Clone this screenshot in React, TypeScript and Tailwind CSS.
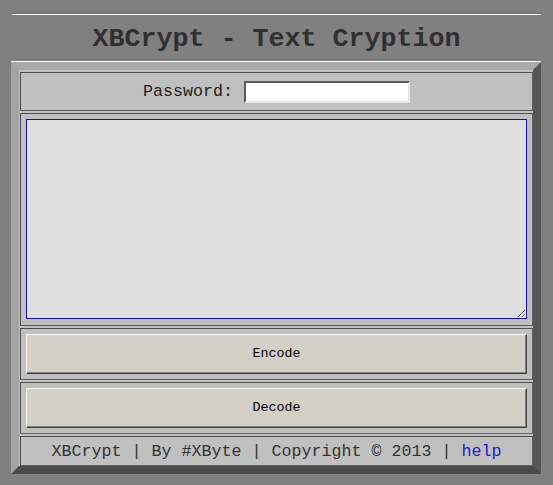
import React from "react";

const cell =
  "border border-t-[#4e4e4e] border-l-[#4e4e4e] border-r-[#5e5e5e] border-b-[#5e5e5e] bg-[#c0c0c0]";

const btn =
  "block h-[40px] w-full border border-t-white border-l-white border-r-[#404040] border-b-[#404040] bg-[#d4d0c8] text-[13.33px] text-black shadow-[inset_-1px_-1px_0_#808080]";

export default function App() {
  return (
    <div className="min-h-[485px] bg-[#808080] pt-[13px] font-['Liberation_Mono','Courier_New',monospace]">
      <div className="mx-[12px] w-[529px] border-t border-b border-t-[#6c6c6c] border-b-white" />
      <h1 className="mt-[9px] text-center text-[26.67px] font-bold leading-[30px] text-[#303030]">
        XBCrypt - Text Cryption
      </h1>

      <div className="ml-[11px] mt-[8px] flex w-[530px] flex-col gap-[2px] border-[8px] border-t-[#a9a9a9] border-l-[#a3a3a3] border-r-[#555555] border-b-[#4a4a4a] bg-[#c0c0c0] pl-[1px] pt-[2px] shadow-[0_-1px_0_#ffffff]">
        <div className={`${cell} flex h-[39px] items-center justify-center gap-[11px]`}>
          <span className="text-[16.67px] text-[#222]">Password:</span>
          <input
            type="password"
            className="h-[22px] w-[166px] border-2 border-t-[#5a5a5a] border-l-[#5a5a5a] border-r-[#e4e4e4] border-b-[#e4e4e4] bg-white outline-none"
          />
        </div>

        <div className={`${cell} px-[5px] pt-[5px] pb-[6px]`}>
          <textarea className="block h-[200px] w-full border border-[#1414c4] bg-[#e0e0e0] outline-none" />
        </div>

        <div className={`${cell} p-[5px]`}>
          <button className={btn}>Encode</button>
        </div>

        <div className={`${cell} p-[5px]`}>
          <button className={btn}>Decode</button>
        </div>

        <div className={`${cell} flex h-[30px] items-center justify-center text-[16.67px] text-[#333]`}>
          <span className="whitespace-pre">
            XBCrypt | By #XByte | Copyright © 2013 | <a className="text-[#1a1ad4]">help</a>
          </span>
        </div>
      </div>
    </div>
  );
}
